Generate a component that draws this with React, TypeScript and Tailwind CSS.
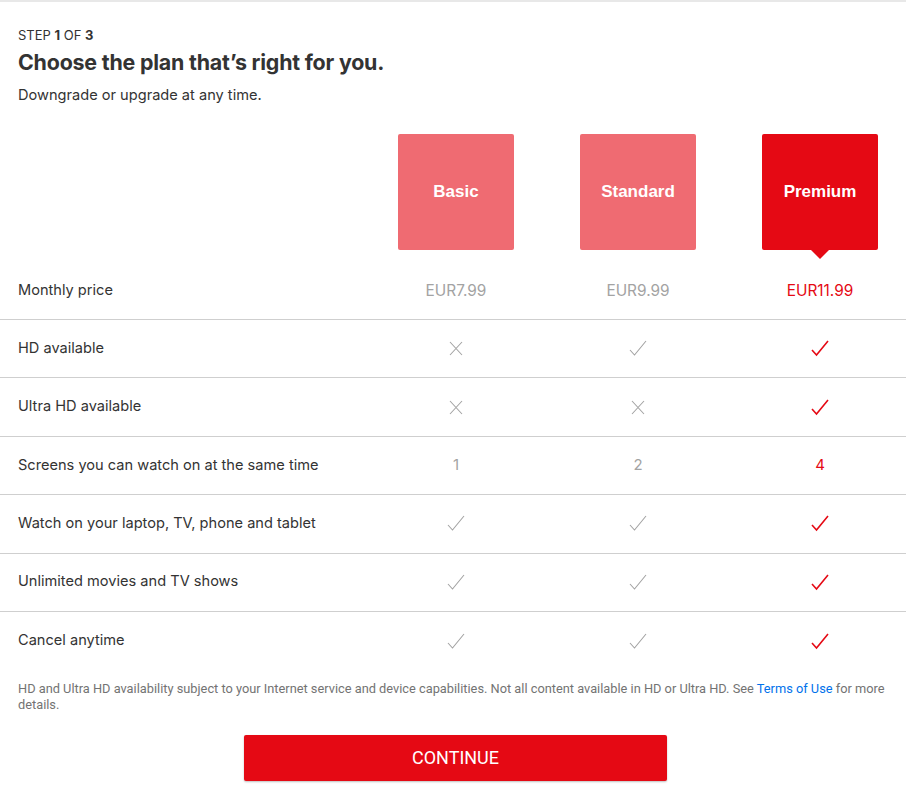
import { Fragment } from 'react';

type Cell = 'yes' | 'no' | string;

const rows: { label: string; cells: Cell[] }[] = [
  { label: 'HD available', cells: ['no', 'yes', 'yes'] },
  { label: 'Ultra HD available', cells: ['no', 'no', 'yes'] },
  { label: 'Screens you can watch on at the same time', cells: ['1', '2', '4'] },
  { label: 'Watch on your laptop, TV, phone and tablet', cells: ['yes', 'yes', 'yes'] },
  { label: 'Unlimited movies and TV shows', cells: ['yes', 'yes', 'yes'] },
  { label: 'Cancel anytime', cells: ['yes', 'yes', 'yes'] },
];

const plans = [
  { name: 'Basic', price: 'EUR7.99' },
  { name: 'Standard', price: 'EUR9.99' },
  { name: 'Premium', price: 'EUR11.99' },
];

const SELECTED = 2;

const Check = ({ active }: { active: boolean }) => (
  <svg width="18" height="17" viewBox="0 0 18 17" fill="none">
    <path
      d="M1 10 L5.5 15 L17 1"
      stroke={active ? '#e50914' : '#a3a3a3'}
      strokeWidth={active ? 1.6 : 1.1}
    />
  </svg>
);

const Cross = () => (
  <svg width="14" height="15" viewBox="0 0 14 15" fill="none">
    <path d="M1 1 L13 14 M13 1 L1 14" stroke="#a3a3a3" strokeWidth="1.1" />
  </svg>
);

const CellValue = ({ value, active }: { value: Cell; active: boolean }) => {
  if (value === 'yes') return <Check active={active} />;
  if (value === 'no') return <Cross />;
  return <span className={`text-[15px] ${active ? 'text-[#e50914]' : 'text-[#a3a3a3]'}`}>{value}</span>;
};

export default function App() {
  return (
    <div className="min-h-[800px] w-full overflow-hidden border-t-2 border-[#e8e8e8] bg-white font-['Inter',sans-serif] text-[#333]">
      <div className="w-[911px]">
        {/* ── header ─────────────────────────── */}
        <div className="px-[18px] pt-[25px]">
          <p className="text-[13px] leading-[16px] uppercase">
            Step <b className="font-bold">1</b> of <b className="font-bold">3</b>
          </p>
          <h1 className="mt-[4px] text-[21.4px] font-bold leading-[30px] tracking-[-0.2px]">Choose the plan that’s right for you.</h1>
          <p className="mt-[8px] text-[14.6px] leading-[20px]">Downgrade or upgrade at any time.</p>
        </div>

        {/* ── plan table ─────────────────────── */}
        <div className="mt-[29px] grid grid-cols-[365px_182px_182px_182px]">
          <div />
          {plans.map((p, i) => (
            <div key={p.name} className="flex justify-center">
              <div
                className={`relative flex h-[116px] w-[116px] items-center justify-center rounded-[2px] font-['Liberation_Sans',Arial,sans-serif] text-[17px] font-bold text-white ${
                  i === SELECTED ? 'bg-[#e50914]' : 'bg-[#ef6b72]'
                }`}
              >
                {p.name}
                {i === SELECTED && (
                  <span className="absolute top-full left-1/2 -translate-x-1/2 border-x-[9px] border-t-[9px] border-x-transparent border-t-[#e50914]" />
                )}
              </div>
            </div>
          ))}

          <div className="flex h-[70px] items-center border-b border-[#cfcfcf] pl-[18px] pt-[13px] text-[14.6px]">Monthly price</div>
          {plans.map((p, i) => (
            <div
              key={p.price}
              className={`flex h-[70px] items-center justify-center border-b border-[#cfcfcf] pt-[13px] text-[15.4px] ${
                i === SELECTED ? 'text-[#e50914]' : 'text-[#a3a3a3]'
              }`}
            >
              {p.price}
            </div>
          ))}

          {rows.map((r, ri) => {
            const last = ri === rows.length - 1;
            const line = last ? '' : 'border-b border-[#cfcfcf]';
            return (
              <Fragment key={r.label}>
                <div className={`flex h-[58.4px] items-center pl-[18px] text-[14.6px] ${line}`}>{r.label}</div>
                {r.cells.map((c, ci) => (
                  <div key={ci} className={`flex h-[58.4px] items-center justify-center ${line}`}>
                    <CellValue value={c} active={ci === SELECTED} />
                  </div>
                ))}
              </Fragment>
            );
          })}
        </div>

        {/* ── footer ─────────────────────────── */}
        <p className="mt-[11px] w-[890px] pl-[18px] font-['Roboto',sans-serif] text-[12.8px] leading-[16px] text-[#737373]">
          HD and Ultra HD availability subject to your Internet service and device capabilities. Not all content available in HD or Ultra HD. See{' '}
          <a href="#" className="text-[#0071eb]">Terms of Use</a> for more details.
        </p>

        <div className="mt-[22px] flex justify-center">
          <button className="h-[46px] w-[423px] rounded-[2px] bg-[#e50914] font-['Roboto',sans-serif] text-[18px] leading-none text-white shadow-[0_1px_2px_rgba(0,0,0,0.25)]">
            CONTINUE
          </button>
        </div>
      </div>
    </div>
  );
}
